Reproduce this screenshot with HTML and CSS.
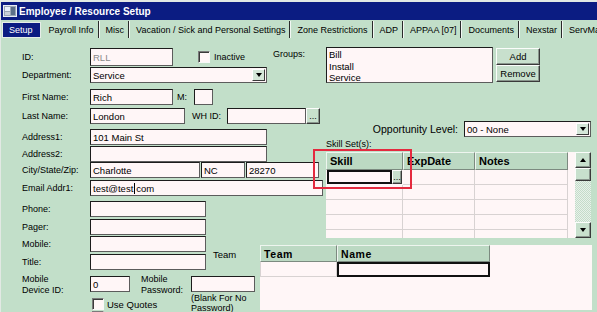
FILE: index.html
```html
<!DOCTYPE html>
<html lang="en">
<head>
  <meta charset="UTF-8">
  <meta name="viewport" content="width=device-width, initial-scale=1.0">
  <title>Employee / Resource Setup</title>
  <link rel="stylesheet" href="styles.css">
</head>
<body>
<div class="window">

  <div class="titlebar">
    <svg class="app-icon" width="14" height="12" viewBox="0 0 14 12">
      <rect x="0.5" y="0.5" width="13" height="11" fill="#9aa6b4" stroke="#e8eef4"/>
      <rect x="2" y="2" width="5" height="4" fill="#e8f0fa"/>
      <rect x="8" y="2" width="4" height="8" fill="#5c7088"/>
      <rect x="2" y="7" width="5" height="3" fill="#c8d0d8"/>
    </svg>
    <span>Employee / Resource Setup</span>
  </div>

  <div class="tabs">
    <span class="tab active">Setup</span>
    <span class="tab">Payroll Info</span>
    <span class="tab">Misc</span>
    <span class="tab">Vacation / Sick and Personal Settings</span>
    <span class="tab">Zone Restrictions</span>
    <span class="tab">ADP</span>
    <span class="tab">APPAA [07]</span>
    <span class="tab">Documents</span>
    <span class="tab">Nexstar</span>
    <span class="tab last">ServMa</span>
  </div>

  <div class="form">
    <div class="top">

      <!-- left column: person details -->
      <div class="left">
        <div class="row r-id">
          <span class="lbl">ID:</span>
          <span class="field w-id dim">RLL</span>
          <span class="check inactive-box"></span>
          <span class="txt">Inactive</span>
          <span class="txt groups-lbl">Groups:</span>
        </div>
        <div class="row r-dept">
          <span class="lbl">Department:</span>
          <span class="field select w-dept">Service<span class="arrow-btn"><i class="tri down"></i></span></span>
        </div>
        <div class="row r-first">
          <span class="lbl">First Name:</span>
          <span class="field w-id">Rich</span>
          <span class="txt m-lbl">M:</span>
          <span class="field w-m"></span>
        </div>
        <div class="row r-last">
          <span class="lbl">Last Name:</span>
          <span class="field w-last">London</span>
          <span class="txt wh-lbl">WH ID:</span>
          <span class="field w-wh"></span>
          <span class="btn dots">...</span>
        </div>
        <div class="row r-addr1">
          <span class="lbl">Address1:</span>
          <span class="field w-addr">101 Main St</span>
        </div>
        <div class="row r-addr2">
          <span class="lbl">Address2:</span>
          <span class="field w-addr"></span>
        </div>
        <div class="row r-city">
          <span class="lbl">City/State/Zip:</span>
          <span class="field w-city">Charlotte</span>
          <span class="field w-state">NC</span>
          <span class="field w-zip">28270</span>
        </div>
        <div class="row r-email">
          <span class="lbl">Email Addr1:</span>
          <span class="field w-email">test@test<span class="caret"></span>com</span>
        </div>
        <div class="row r-phone">
          <span class="lbl">Phone:</span>
          <span class="field w-phone"></span>
        </div>
        <div class="row r-pager">
          <span class="lbl">Pager:</span>
          <span class="field w-phone"></span>
        </div>
      </div>

      <!-- right column: groups and skills -->
      <div class="right">
        <div class="groups">
          <div class="listbox">
            <div>Bill</div>
            <div>Install</div>
            <div>Service</div>
          </div>
          <div class="group-btns">
            <span class="btn push">Add</span>
            <span class="btn push">Remove</span>
          </div>
        </div>
        <div class="opp-row">
          <span class="txt opp-lbl">Opportunity Level:</span>
          <span class="field select w-opp">00 - None<span class="arrow-btn"><i class="tri down"></i></span></span>
        </div>
        <div class="txt skill-lbl">Skill Set(s):</div>
        <div class="skill-grid">
          <div class="sg-body">
            <div class="g-row g-head">
              <span class="hc w-skill">Skill</span>
              <span class="hc w-exp">ExpDate</span>
              <span class="hc w-notes">Notes</span>
            </div>
            <div class="g-row">
              <span class="cell w-skill edit"><span class="edit-box"></span><span class="btn cell-dots">...</span></span>
              <span class="cell w-exp"></span>
              <span class="cell w-notes"></span>
            </div>
            <div class="g-row"><span class="cell w-skill"></span><span class="cell w-exp"></span><span class="cell w-notes"></span></div>
            <div class="g-row"><span class="cell w-skill"></span><span class="cell w-exp"></span><span class="cell w-notes"></span></div>
            <div class="g-row"><span class="cell w-skill"></span><span class="cell w-exp"></span><span class="cell w-notes"></span></div>
            <div class="g-row"><span class="cell w-skill"></span><span class="cell w-exp"></span><span class="cell w-notes"></span></div>
          </div>
          <div class="vscroll">
            <span class="btn sb-btn"><i class="tri up"></i></span>
            <span class="btn sb-thumb"></span>
            <span class="sb-track"></span>
            <span class="btn sb-btn"><i class="tri down"></i></span>
          </div>
        </div>
      </div>
    </div>

    <div class="bottom">
      <div class="bleft">
        <div class="mt-block">
          <div class="mt-rows">
            <div class="row">
              <span class="lbl">Mobile:</span>
              <span class="field w-phone"></span>
            </div>
            <div class="row r-title">
              <span class="lbl">Title:</span>
              <span class="field w-phone"></span>
            </div>
          </div>
          <span class="txt team-lbl">Team</span>
        </div>
        <div class="dev-row">
          <span class="lbl two-line">Mobile<br>Device ID:</span>
          <div class="dev-col">
            <span class="field w-dev">0</span>
            <div class="check-row"><span class="check"></span><span class="txt">Use Quotes</span></div>
            <div class="check-row next"><span class="check dark"></span></div>
          </div>
          <span class="txt two-line pw-lbl">Mobile<br>Password:</span>
          <div class="pw-col">
            <span class="field w-pw"></span>
            <span class="txt note">(Blank For No<br>Password)</span>
          </div>
        </div>
      </div>

      <div class="team-grid">
        <div class="g-row t-head">
          <span class="hc w-team">Team</span>
          <span class="hc w-name">Name</span>
        </div>
        <div class="g-row t-row">
          <span class="cell w-team"></span>
          <span class="cell w-name focus"></span>
        </div>
      </div>
    </div>

    <div class="highlight"></div>
  </div>
</div>
</body>
</html>
```

FILE: styles.css
```css
* {
  box-sizing: border-box;
}
body {
  margin: 0;
  width: 597px;
  height: 312px;
  overflow: hidden;
  background-color: #c2dfc9;
  font-family: "Liberation Sans", Arial, sans-serif;
  font-size: 9px;
  color: #000;
}
.window {
  height: 312px;
  border-top: 2px solid #e2e9e4;
  border-left: 1px solid #e2e9e4;
  background-color: #c2dfc9;
}

/* title + tabs */
.titlebar {
  display: flex;
  align-items: center;
  height: 18px;
  padding-left: 2px;
  background-color: #0b1c82;
  color: #fff;
  font-weight: bold;
  font-size: 10px;
}
.app-icon {
  margin-right: 2px;
}
.tabs {
  display: flex;
  height: 17px;
  margin-top: 1px;
  padding-left: 1px;
  white-space: nowrap;
  overflow: hidden;
}
.tab {
  display: flex;
  align-items: center;
  padding: 0 4px 0 6px;
  border-right: 1px solid #2a2a2a;
  box-shadow: 1px 0 0 #f2f7f3;
  margin-right: 1px;
}
.tab.active {
  margin-top: 1px;
  padding: 0 7px 0 6px;
  background-color: #0b1c82;
  color: #fff;
  border: 1px solid #e6ede8;
  box-shadow: none;
  margin-right: 2px;
}
.tab.last {
  padding-right: 0;
  border-right: none;
  box-shadow: none;
}

/* form */
.form {
  position: relative;
  padding: 10px 5px 0 21px;
}
.top {
  display: flex;
}
.left {
  width: 304px;
}
.right {
  width: 266px;
  margin-top: -1px;
}
.row {
  display: flex;
  align-items: center;
}
.lbl {
  width: 68px;
  flex: none;
}
.txt {
  white-space: nowrap;
}
.field {
  display: flex;
  align-items: center;
  flex: none;
  height: 16px;
  padding: 0 2px;
  background-color: #fff6f7;
  border: 1px solid #1c1c1c;
  border-right-color: #5c5c5c;
  border-bottom-color: #5c5c5c;
  font-size: 9.5px;
  white-space: nowrap;
  overflow: hidden;
}
.dim {
  color: #8a8a8a;
}
.caret {
  display: inline-block;
  width: 1px;
  height: 11px;
  background-color: #000;
  margin: 0 1px;
}
.select {
  padding-right: 1px;
}
.arrow-btn {
  display: flex;
  align-items: center;
  justify-content: center;
  width: 13px;
  height: 12px;
  margin-left: auto;
  background-color: #d4e6d8;
  border: 1px solid;
  border-color: #fff #3a3a3a #3a3a3a #fff;
}
.tri {
  display: block;
  width: 0;
  height: 0;
  border-left: 3px solid transparent;
  border-right: 3px solid transparent;
}
.tri.down {
  border-top: 4px solid #000;
}
.tri.up {
  border-bottom: 4px solid #000;
}
.btn {
  display: flex;
  align-items: center;
  justify-content: center;
  background-color: #c8e0cd;
  border: 1px solid;
  border-color: #fbfdfb #3a3a3a #3a3a3a #fbfdfb;
  box-shadow: inset -1px -1px #8a968d;
}
.check {
  display: block;
  flex: none;
  width: 12px;
  height: 12px;
  background-color: #fff6f7;
  border: 1px solid;
  border-color: #7a7a7a #f8f8f8 #f8f8f8 #7a7a7a;
  box-shadow: inset 1px 1px #3a3a3a;
}
.check.dark {
  background-color: #6a6a6a;
}

/* left rows */
.r-id {
  height: 18px;
}
.w-id { width: 83px; }
.r-id .w-id { height: 18px; }
.inactive-box {
  margin-left: 25px;
  margin-right: 4px;
}
.groups-lbl {
  align-self: flex-start;
  margin-left: 28px;
  margin-top: 1px;
}
.r-dept { margin-top: 1px; }
.w-dept { width: 177px; }
.r-first { margin-top: 6px; }
.m-lbl {
  width: 17px;
  margin-left: 4px;
}
.w-m { width: 19px; }
.r-last { margin-top: 3px; }
.w-last { width: 95px; }
.wh-lbl {
  width: 35px;
  margin-left: 7px;
}
.w-wh { width: 79px; }
.dots {
  width: 14px;
  height: 16px;
  font-size: 9px;
  align-items: flex-end;
  padding-bottom: 2px;
}
.r-addr1 { margin-top: 5px; }
.r-addr2 { margin-top: 1px; }
.w-addr { width: 177px; }
.w-city { width: 110px; }
.w-state {
  width: 44px;
  margin-left: 1px;
}
.w-zip {
  width: 73px;
  margin-left: 1px;
}
.r-email { margin-top: 2px; }
.w-email { width: 233px; }
.r-phone { margin-top: 5px; }
.r-pager { margin-top: 2px; }
.w-phone { width: 116px; }

/* right column */
.groups {
  display: flex;
}
.listbox {
  width: 167px;
  height: 36px;
  padding: 1px 2px;
  background-color: #fff6f7;
  border: 1px solid #1c1c1c;
  border-right-color: #5c5c5c;
  border-bottom-color: #5c5c5c;
  font-size: 9.5px;
  line-height: 11.5px;
}
.group-btns {
  margin-left: 3px;
  margin-top: 1px;
}
.push {
  width: 44px;
  height: 17px;
  font-size: 9.5px;
}
.opp-row {
  display: flex;
  align-items: center;
  justify-content: flex-end;
  margin-top: 38px;
  padding-right: 1px;
}
.opp-lbl {
  margin-right: 6px;
  font-size: 10.5px;
}
.w-opp { width: 127px; }
.skill-lbl {
  height: 12px;
  margin-top: 1px;
  line-height: 12px;
}

/* grids */
.skill-grid {
  display: flex;
  height: 86px;
  margin-top: 2px;
  margin-bottom: -2px;
}
.sg-body {
  width: 249px;
  overflow: hidden;
  background-color: #fff6f7;
}
.g-row {
  display: flex;
  height: 15px;
}
.g-head {
  height: 18px;
}
.hc {
  display: flex;
  align-items: center;
  flex: none;
  padding-left: 3px;
  background-color: #bcd9c3;
  border: 1px solid;
  border-color: #eef5ef #7c8a80 #7c8a80 #eef5ef;
  font-weight: bold;
  font-size: 11px;
}
.cell {
  display: flex;
  flex: none;
  border-right: 1px solid #d8d2d2;
  border-bottom: 1px solid #d8d2d2;
}
.w-skill { width: 77px; }
.w-exp { width: 72px; }
.w-notes { width: 93px; }
.edit {
  border: none;
  padding: 0 1px 1px 1px;
}
.edit-box {
  width: 65px;
  border: 2px solid #111;
  background-color: #fff6f7;
}
.cell-dots {
  width: 10px;
  font-size: 9px;
  align-items: flex-end;
  padding-bottom: 1px;
}
.vscroll {
  display: flex;
  flex-direction: column;
  width: 16px;
}
.sb-btn {
  height: 16px;
  flex: none;
}
.sb-thumb {
  height: 13px;
  flex: none;
}
.sb-track {
  flex: 1;
  background: repeating-conic-gradient(#e8f1ea 0 25%, #c4dcc9 0 50%) 0 0 / 2px 2px;
}

/* bottom */
.bottom {
  display: flex;
}
.bleft {
  width: 238px;
  flex: none;
}
.mt-block {
  display: flex;
  align-items: center;
}
.r-title { margin-top: 2px; }
.team-lbl {
  margin-left: 7px;
  margin-top: 3px;
  font-size: 9.5px;
}
.dev-row {
  display: flex;
  align-items: flex-start;
  margin-top: 4px;
}
.two-line {
  line-height: 11px;
}
.dev-col {
  width: 51px;
  flex: none;
}
.w-dev {
  width: 40px;
  margin-top: 2px;
}
.check-row {
  display: flex;
  align-items: center;
  margin-top: 6px;
  margin-left: 2px;
  white-space: nowrap;
}
.check-row .txt {
  margin-left: 3px;
  font-size: 9.5px;
}
.check-row.next {
  margin-top: 1px;
}
.pw-lbl {
  width: 50px;
  flex: none;
}
.pw-col {
  display: flex;
  flex-direction: column;
}
.w-pw {
  width: 64px;
  margin-top: 2px;
}
.note {
  margin-top: 1px;
  line-height: 10px;
}
.team-grid {
  flex: 1;
  height: 65px;
  margin-top: 9px;
  background-color: #fff6f7;
}
.t-head {
  height: 17px;
}
.t-head .hc {
  font-size: 10.5px;
  letter-spacing: 0.6px;
}
.w-team { width: 77px; }
.w-name { width: 153px; }
.t-row .w-team {
  border: 1px solid #d8d2d2;
  border-top: none;
}
.focus {
  border: 2px solid #111;
}

/* red highlight drawn over the skill grid */
.highlight {
  position: absolute;
  left: 312px;
  top: 111px;
  width: 99px;
  height: 40px;
  border: 2px solid #e42a3f;
}
```
